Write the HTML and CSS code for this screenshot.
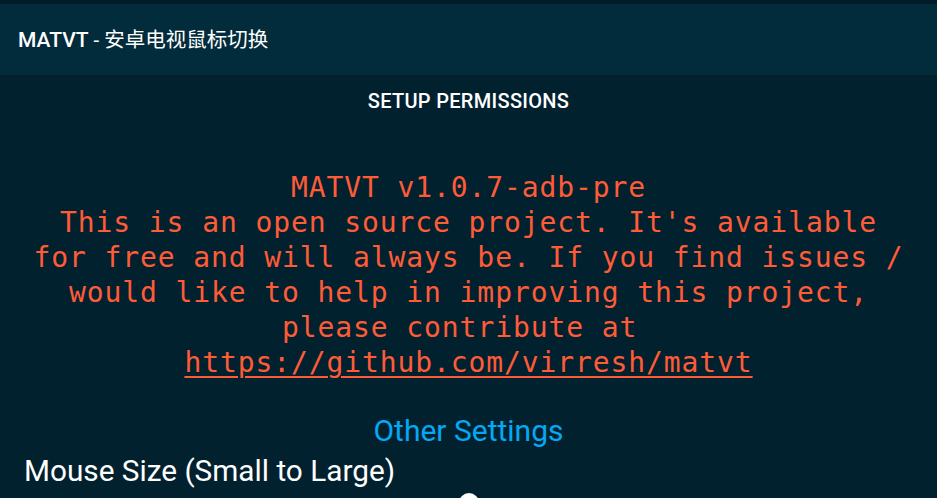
FILE: index.html
```html
<!DOCTYPE html>
<html lang="zh">
<head>
<meta charset="utf-8">
<title>MATVT</title>
<link rel="stylesheet" href="styles.css">
</head>
<body>
<div class="status"></div>
<header class="appbar">
  <h1 class="title"><span class="title-name">MATVT</span><span class="title-sub"> - 安卓电视鼠标切换</span></h1>
</header>
<main class="content">
  <div class="setup-row"><button class="setup">SETUP PERMISSIONS</button></div>
  <p class="about">MATVT v1.0.7-adb-pre<br>This is an open source project. It's available<br>for free and will always be. If you find issues /<br>would like to help in improving this project,<br>please contribute at&nbsp;<br><a class="link" href="#">https://github.com/virresh/matvt</a></p>
  <h2 class="section">Other Settings</h2>
  <div class="setting">
    <div class="setting-label">Mouse Size (Small to Large)</div>
    <div class="slider"><span class="thumb"></span></div>
  </div>
</main>
</body>
</html>
```
FILE: styles.css
```css
html, body {
  margin: 0;
  padding: 0;
  height: 100%;
  overflow: hidden;
}
body {
  background: #02212f;
  font-family: Roboto, "Noto Sans CJK SC", sans-serif;
  color: #ffffff;
}
.status {
  height: 4px;
  background: #011c28;
}
.appbar {
  height: 71px;
  background: #022b3b;
  display: flex;
  align-items: center;
  padding-left: 18px;
}
.title {
  margin: 0;
  font-size: 20px;
  font-weight: 400;
  color: #ffffff;
  line-height: 24px;
}
.title-name {
  font-weight: 500;
  font-size: 21px;
}
.title-sub {
  font-size: 20.5px;
}
.content {
  display: flex;
  flex-direction: column;
}
.setup-row {
  display: flex;
  justify-content: center;
  padding-top: 2px;
}
.setup {
  height: 48px;
  background: transparent;
  border: none;
  color: #ffffff;
  font-family: Roboto, sans-serif;
  font-weight: 500;
  font-size: 20px;
  padding: 0 16px;
  letter-spacing: 0.3px;
}
.about {
  margin: 45px 0 0;
  text-align: center;
  font-family: "DejaVu Sans Mono", monospace;
  font-size: 28px;
  letter-spacing: 0.9px;
  line-height: 35px;
  color: #ff5b37;
  white-space: nowrap;
}
.link {
  color: #ff5b37;
  text-decoration: underline;
  text-underline-offset: 4px;
  text-decoration-thickness: 2px;
}
.section {
  margin: 33px 0 0;
  text-align: center;
  font-size: 30px;
  font-weight: 400;
  line-height: 36px;
  color: #03a9f4;
}
.setting {
  margin-top: 4px;
  padding-left: 24px;
}
.setting-label {
  font-size: 29.75px;
  line-height: 36px;
  color: #ffffff;
}
.slider {
  display: flex;
  justify-content: center;
  padding-top: 4px;
  padding-right: 24px;
}
.thumb {
  width: 20px;
  height: 20px;
  border-radius: 50%;
  background: #ffffff;
}
```
